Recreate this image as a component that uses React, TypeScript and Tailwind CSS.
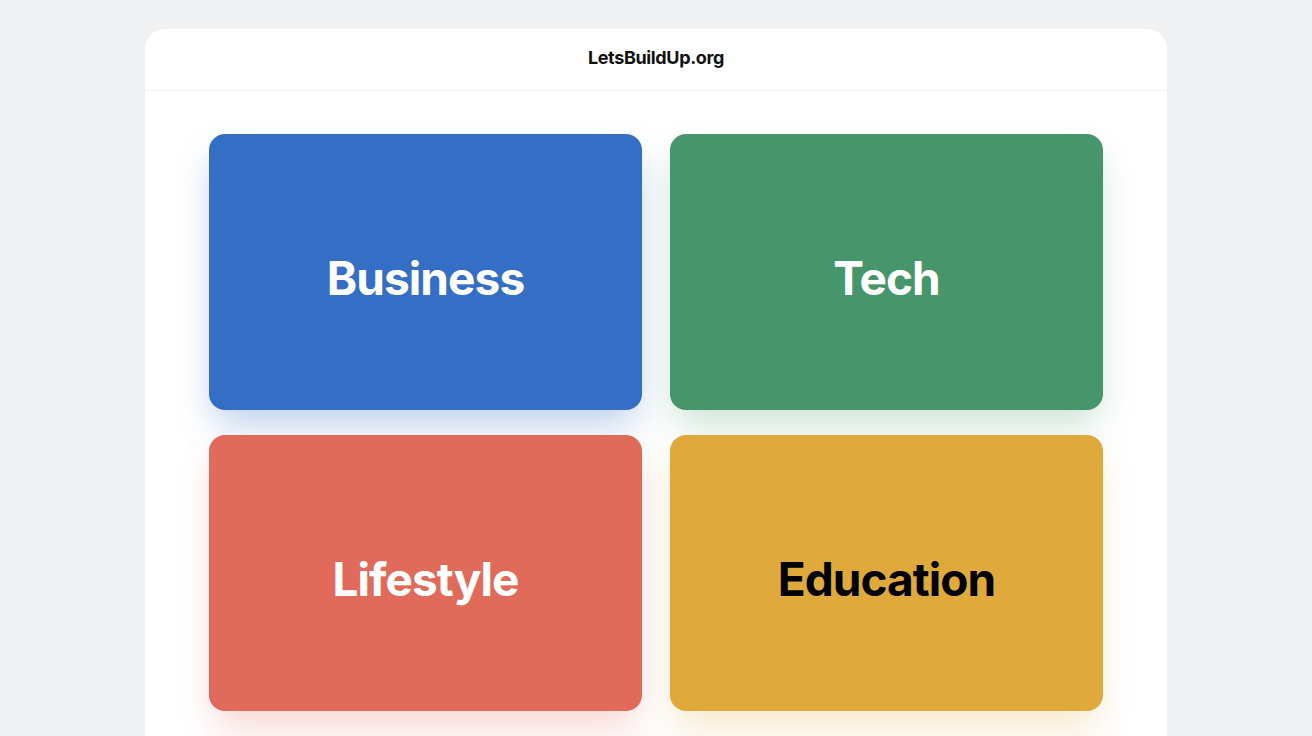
import React from "react";

interface Category {
  name: string;
  card: string;
  text: string;
  label?: boolean;
}

const CATEGORIES: Category[] = [
  { name: "Business", card: "bg-[#356fc5] shadow-[0_18px_36px_-6px_rgba(53,111,197,0.35)]", text: "text-white", label: true },
  { name: "Tech", card: "bg-[#46956b] shadow-[0_18px_36px_-6px_rgba(70,149,107,0.3)]", text: "text-white", label: true },
  { name: "Lifestyle", card: "bg-[#e06b5a] shadow-[0_18px_36px_-6px_rgba(224,107,90,0.3)]", text: "text-white", label: true },
  { name: "Education", card: "bg-[#dfa93b] shadow-[0_18px_36px_-6px_rgba(223,169,59,0.3)]", text: "text-black", label: true },
  // next row only peeks in at the bottom edge
  { name: "more-1", card: "bg-[#e06b5a] shadow-[0_18px_36px_-6px_rgba(224,107,90,0.3)]", text: "text-white" },
  { name: "more-2", card: "bg-[#dfa93b] shadow-[0_18px_36px_-6px_rgba(223,169,59,0.3)]", text: "text-black" },
];

function CategoryCard({ cat }: { cat: Category }) {
  return (
    <div className={`flex h-[276px] items-center justify-center rounded-2xl pt-[12px] ${cat.card}`}>
      {cat.label && (
        <span className={`text-[46px] font-bold tracking-[-0.02em] ${cat.text}`}>{cat.name}</span>
      )}
    </div>
  );
}

export default function App() {
  return (
    <div
      className="h-[736px] overflow-hidden bg-[#f0f1f3] px-[145px] pt-[29px]"
      style={{ fontFamily: "Inter, 'Noto Sans', sans-serif" }}
    >
      <div className="min-h-[900px] rounded-[20px] bg-white">
        <header className="flex h-[62px] items-center justify-center border-b border-[#f0f1f3] pb-[5px]">
          <span className="text-[18px] font-bold tracking-[-0.02em] text-[#111]">LetsBuildUp.org</span>
        </header>
        <div className="grid grid-cols-2 gap-x-[28px] gap-y-[25px] px-[64px] pt-[43px]">
          {CATEGORIES.map((c) => (
            <CategoryCard key={c.name} cat={c} />
          ))}
        </div>
      </div>
    </div>
  );
}
